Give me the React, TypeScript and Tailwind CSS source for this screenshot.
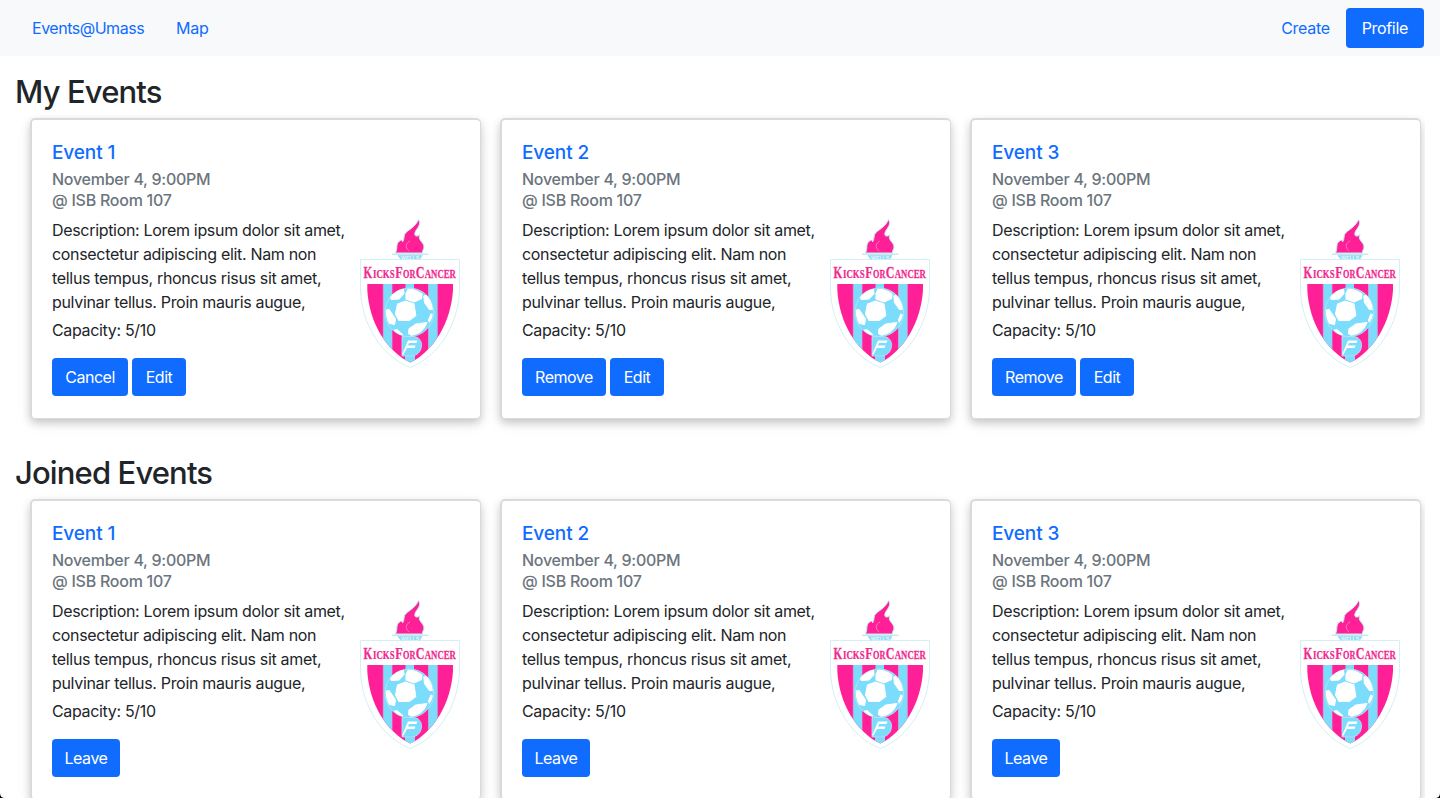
function Logo() {
  return (
    <svg viewBox="0 0 100 150" className="h-[150px] w-[100px] shrink-0" aria-hidden="true">
      <defs>
        <clipPath id="shield">
          <path d="M7.3 66H93V72C91 104 74 133 50.3 144.5C26 133 9 104 7.3 72Z" />
        </clipPath>
      </defs>
      <path d="M0.5 41.5H99.5V72C98.5 106 79 138 50.3 149.5C21 138 1.500 106 0.5 72Z" fill="#fff" stroke="#d3f0f5" strokeWidth="1" />
      <path d="M35.500 35C38 30 35.500 26.500 39 23.500C41 21.500 43 22 42.500 24C45 21 43 17 46 14.500C50 11 56 8 58.500 1.500C62 7 56 11 55 14.500C54 18 56.500 19.500 60 16.500C57 22 64 24 64 29C64 31 62 33 62.500 35Z" fill="#ff2098" stroke="#c6e8f2" strokeWidth="1" />
      <path d="M49 33C44.500 29 46 25 50 23" fill="none" stroke="#ff86c6" strokeWidth=".8" />
      <path d="M32 36.200H68.500M38 37.500H62L59.500 41.500H41Z" fill="#8fdcf5" stroke="#a9dfee" strokeWidth="1" />
      <text transform="translate(41 41.500) scale(.9 1)" fontSize="5.800" fontWeight="700" fill="#e4f8fd" fontFamily="Liberation Sans, sans-serif">WELLS</text>
      <g fill="#f0288f" stroke="#f0288f" strokeWidth=".25" fontWeight="700" fontFamily="Liberation Serif, serif">
        <text transform="translate(3.600 60) scale(.64 1)" fontSize="17.500">K</text>
        <text transform="translate(13 60) scale(.74 1)" fontSize="12">ICKS</text>
        <text transform="translate(35.200 60) scale(.7 1)" fontSize="17.500">F</text>
        <text transform="translate(43 60) scale(.69 1)" fontSize="12">OR</text>
        <text transform="translate(55.700 60) scale(.69 1)" fontSize="17.500">C</text>
        <text transform="translate(64.800 60) scale(.73 1)" fontSize="12">ANCER</text>
      </g>
      <g clipPath="url(#shield)">
        <path d="M0 60H100V150H0Z" fill="#ff2098" />
        <path d="M23.3 60H32V150H23.3ZM45.500 60H54V80H45.500ZM68.500 60H77.300V150H68.500ZM45 137H55V150H45Z" fill="#7bdcfc" />
        <path d="M23.300 60V150M32 60V150M68.500 60V150M77.300 60V150" stroke="#c3b6e2" strokeWidth=".7" />
      </g>
      <circle cx="49.300" cy="94.300" r="24.300" fill="#7bdcfc" stroke="#b9e9f6" strokeWidth=".8" />
      <g fill="#fff" stroke="#fff" strokeWidth="1.1" strokeLinejoin="round">
        <path d="M30.500 79.500C33 76 38 72 43.500 71.500L44 75.500L39 81L31.500 81.500Z" />
        <path d="M46 76L48 71.300C53 71 58 73 62 76L61.500 80.500L54 84L46 81Z" />
        <path d="M63.800 78L66 77.500C69.500 81 71.800 86 72.300 91.500L69.500 91.500L64.500 84.500Z" />
        <path d="M37.500 86L45.500 83L54 86L55.800 97.500L49 102.500L39 102.500L35.500 96Z" />
        <path d="M26.300 92L29 91.500L35.500 101L34.500 106.500L29.500 105.500C27.300 101.500 26.200 97 26.300 92Z" />
        <path d="M49 111L56 106L67 104.500C64.500 111 59 116 51.500 117.200L48.500 115.500Z" />
        <path d="M68.500 102L71 96L72.300 97C71.700 100 70.700 102 69.200 104Z" />
        <path d="M34.500 112L37 111.700L42.500 116.700C39 116 37 114.500 34.500 112Z" />
      </g>
      <path d="M42 118.500H53C59 118.500 62 123 61.500 128C61 134 57 137.500 52 138H42Z" fill="#7bdcfc" stroke="#c7dff1" strokeWidth=".8" />
      <path d="M48 122.500H57.500L56.500 125H49L48 127.500H55.500L54.500 130H47L43.500 136.500H42Z" fill="#fff" />
    </svg>
  );
}

const buttonWidths: Record<string, string> = {
  Cancel: "w-[76px]",
  Remove: "w-[84px]",
  Edit: "w-[54px]",
  Leave: "w-[68px]",
};

function EventCard({ title, actions }: { title: string; actions: string[] }) {
  return (
    <article className="h-[301px] w-[451px] shrink-0 rounded-[5px] border border-t-2 border-l-2 border-[#dadada] bg-white pt-[21px] pl-5 shadow-[0_4px_8px_0_rgba(0,0,0,0.2),0_6px_20px_0_rgba(0,0,0,0.04)]">
      <h5 className="mb-1 text-[19px] leading-6 font-medium tracking-[-0.006em] text-[#0f6cff]">{title}</h5>
      <div className="text-base leading-[21px] font-medium tracking-[-0.016em] text-[#6c757d]">
        <p>November 4, 9:00PM</p>
        <p>@ ISB Room 107</p>
      </div>
      <div className="flex pt-[7px]">
        <div className="w-[308px]">
          <p className="leading-6 tracking-[-0.02em] whitespace-nowrap">
            Description: Lorem ipsum dolor sit amet,
            <br />
            consectetur adipiscing elit. Nam non
            <br />
            tellus tempus, rhoncus risus sit amet,
            <br />
            pulvinar tellus. Proin mauris augue,
          </p>
          <p className="mt-1 leading-6 tracking-[-0.021em]">Capacity: 5/10</p>
          <div className="mt-4 flex gap-1">
            {actions.map((a) => (
              <button key={a} className={`h-[38px] rounded-[4px] bg-[#0f6cff] text-center text-base leading-6 tracking-[-0.03em] text-white ${buttonWidths[a]}`}>{a}</button>
            ))}
          </div>
        </div>
        <Logo />
      </div>
    </article>
  );
}

function Section({ title, actions }: { title: string; actions: string[][] }) {
  return (
    <section className="h-[381px] shrink-0">
      <h2 className="text-[31px] leading-[38px] font-medium tracking-[-0.028em]">{title}</h2>
      <div className="-ml-[15px] flex h-[338px] gap-[19px] overflow-hidden pt-[7px] pl-[30px]">
        {actions.map((a, i) => (
          <EventCard key={i} title={`Event ${i + 1}`} actions={a} />
        ))}
      </div>
    </section>
  );
}

export default function App() {
  return (
    <div className="relative h-[798px] overflow-hidden bg-white font-['Inter',sans-serif] text-[#212529]">
      <nav className="flex h-14 items-center bg-[#f8f9fb] px-4 tracking-[-0.02em] text-[#0f6cff]">
        <a className="px-4 tracking-[-0.03em]">Events@Umass</a>
        <a className="px-4">Map</a>
        <a className="ml-auto px-4">Create</a>
        <a className="rounded-[4px] bg-[#0f6cff] px-4 py-2 text-white">Profile</a>
      </nav>
      <main className="mx-[15px] pt-[17px]">
        <Section title="My Events" actions={[["Cancel", "Edit"], ["Remove", "Edit"], ["Remove", "Edit"]]} />
        <Section title="Joined Events" actions={[["Leave"], ["Leave"], ["Leave"]]} />
      </main>
      <svg className="absolute bottom-0 left-0 size-[5px]" viewBox="0 0 5 5"><path d="M0 0Q0 5 5 5H0Z" /></svg>
      <svg className="absolute right-0 bottom-0 size-[5px]" viewBox="0 0 5 5"><path d="M5 0Q5 5 0 5H5Z" /></svg>
    </div>
  );
}
